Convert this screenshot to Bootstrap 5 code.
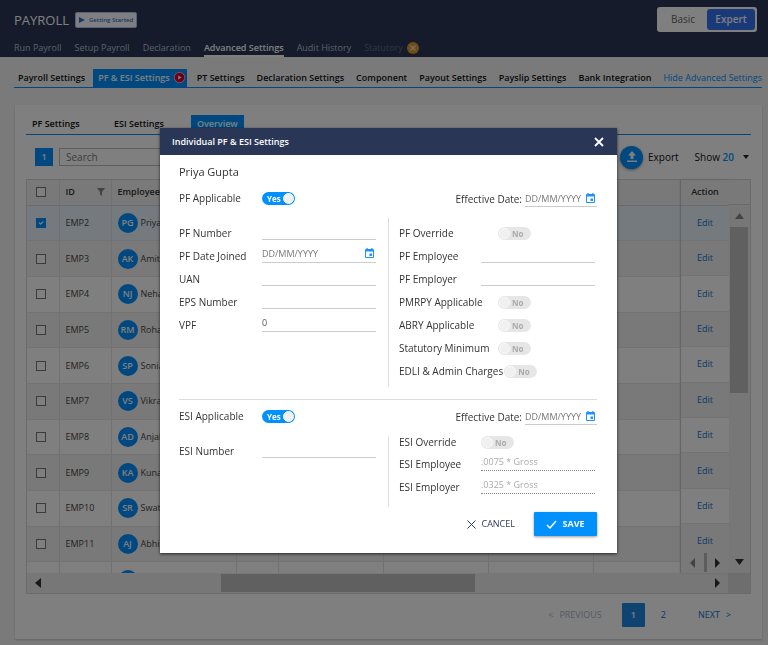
<!DOCTYPE html>
<html lang="en">
<head>
<meta charset="utf-8">
<meta name="viewport" content="width=device-width, initial-scale=1">
<title>Payroll – PF &amp; ESI Settings</title>
<link href="https://cdn.jsdelivr.net/npm/bootstrap@5.3.0/dist/css/bootstrap.min.css" rel="stylesheet">
<style>
  :root { --brand: #0091ff; --navy: #293656; }
  body { font-family: "Open Sans", sans-serif; font-size: 9px; line-height: 12px; color: #222; background: #f5f5f5; min-height: 100vh; overflow: hidden; }
  a { text-decoration: none; }
  button { font-family: inherit; }

  .app-head { background: #2b3756; padding: 7px 11px 0 14px; height: 57px; }
  .app-title { font-size: 13px; line-height: 22px; color: #fff; margin: 0 6px 0 0; }
  .start-btn { font-size: 6px; line-height: 10px; font-weight: 600; color: #2f6fe0; background: #fff; border: 1px solid #a9c4f5; border-radius: 2px; padding: 2px 3px; gap: 4px; }
  .mode-box { background: #fff; border-radius: 3px; padding: 2px; }
  .mode-box button { border: 0; background: none; font-size: 10px; line-height: 19px; color: #666; width: 48px; border-radius: 3px; }
  .mode-box .picked { background: #3572f0; color: #fff; font-weight: 600; }
  .main-nav { gap: 13px; font-size: 9px; line-height: 14px; }
  .main-nav a { color: #b9c0cf; border-bottom: 2px solid transparent; }
  .main-nav .current { color: #fff; font-weight: 600; border-color: #fff; }
  .main-nav .locked { color: #636d86; }

  .sub-nav { margin: 12px 6px 0 14px; padding-left: 4px; border-bottom: 1px solid var(--brand); gap: 12px; font-size: 9px; line-height: 17px; font-weight: 600; }
  .sub-nav a { color: #111; white-space: nowrap; padding-bottom: 1px; }
  .sub-nav .on { color: #fff; background: var(--brand); padding: 0 2px 1px 5px; margin: 0 -2px 0 -4px; gap: 4px; }
  .sub-nav .aside { color: var(--brand); font-weight: 400; }

  .panel { background: #fff; margin: 17px 6px 6px 15px; padding: 10px 11px 12px; box-shadow: 0 1px 2px rgba(0,0,0,.2); }
  .inner-nav { border-bottom: 1px solid var(--brand); gap: 21px; font-size: 9px; line-height: 18px; font-weight: 600; }
  .inner-nav a { color: #111; padding: 0 6px 1px; min-width: 61px; white-space: nowrap; }
  .inner-nav .on { color: #fff; background: var(--brand); min-width: 0; }

  .tools { padding: 0 2px 0 9px; height: 44px; }
  .count-box { width: 18px; height: 18px; background: var(--brand); color: #fff; font-weight: 600; line-height: 18px; }
  .find-input { width: 150px; height: 18px; border: 1px solid #bbb; font-size: 10px; padding: 0 6px; margin-left: 6px; background: #fff; }
  .find-input::placeholder { color: #777; }
  .tools button { border: 0; background: none; font-size: 10px; line-height: 14px; color: #111; padding: 0; gap: 5px; }
  .tools b { color: var(--brand); font-weight: 600; }
  .up-dot { width: 23px; height: 23px; background: var(--brand); box-shadow: 0 1px 3px rgba(0,0,0,.4); }

  .sheet { border: 1px solid #d6d6d6; background: #f2f2f2; height: 415px; }
  .sheet-rows { height: 393px; }
  .pane { overflow: hidden; }
  .pane table { table-layout: fixed; width: 100%; font-size: 9px; margin: 0; height: 418px; }
  .pane th { height: 25px; background: #f2f2f2; font-weight: 600; color: #333; border-bottom: 1px solid #d5d5d5; }
  .pane th, .pane td { padding: 0 6px; border-right: 1px solid #e2e2e2; white-space: nowrap; vertical-align: middle; overflow: hidden; }
  .pane td { background: #fff; color: #444; border-bottom: 1px solid #e6e6e6; }
  .pane tr:nth-child(even) td { background: #f3f3f3; }
  .pane tr.chosen td { background: #e8f4fc; }
  .pane input[type=checkbox] { width: 10px; height: 10px; margin: 0 0 0 3px; border: 1px solid #777; border-radius: 0; float: none; display: block; }
  .pane input[type=checkbox]:checked { background-color: var(--brand); border-color: var(--brand); }
  .face { width: 20px; height: 20px; border-radius: 50%; background: var(--brand); color: #fff; font-weight: 600; line-height: 20px; text-align: center; margin-right: 3px; flex: none; }
  .pane-act { width: 48px; box-shadow: -1px 0 2px rgba(0,0,0,.15); height: 393px; position: relative; }
  .pane-act th, .pane-act td { border-right: 0; text-align: center; padding: 0; }
  .pane-act table { height: 415px; }
  .pane-act td a { color: #1272cf; }
  .act-bar { position: absolute; left: 0; right: 0; bottom: 0; height: 21px; background: #f2f2f2; padding: 0 9px; }
  .act-bar i { width: 3px; height: 19px; background: #bbb; }
  .v-track { width: 21px; background: #efefef; }
  .v-track .cap { height: 25px; background: #f2f2f2; border-bottom: 1px solid #d5d5d5; }
  .v-thumb { width: 18px; height: 166px; background: #c1c1c1; margin-left: 1px; }
  .h-track { height: 20px; background: #efefef; }
  .h-thumb { width: 254px; height: 18px; background: #c1c1c1; margin-left: 180px; }
  .corner { width: 22px; background: #dcdcdc; }
  .pager { margin-top: 9px; padding-right: 20px; font-size: 9px; }
  .pager a { color: #1272cf; }
  .pager .off { color: #a9b7c8; margin-right: 20px; }
  .pager .ends { display: flex; gap: 6px; }
  .pager .here { width: 23px; height: 24px; line-height: 24px; border-radius: 1px; background: #1e88e5; color: #fff; font-weight: 600; text-align: center; }

  .shade { position: fixed; inset: 0; background: rgba(0,0,0,.5); padding: 128px 151px 0 160px; }
  .dlg { background: #fff; box-shadow: 0 1px 3px rgba(0,0,0,.7); font-size: 10px; color: #333; }
  .dlg-head { background: var(--navy); color: #fff; height: 27px; padding: 0 13px 0 12px; }
  .dlg-head h1 { font-size: 9px; line-height: 12px; font-weight: 600; margin: 0; }
  .dlg-head button, .link-btn { border: 0; background: none; padding: 0; }
  .dlg-body { padding: 10px 20px 17px 19px; }
  .person { font-size: 11px; line-height: 14px; margin: 0 0 8px; }
  .sec-top { height: 23px; }
  .tag { width: 83px; flex: none; line-height: 23px; white-space: nowrap; }
  .tag-wide { width: auto; min-width: 99px; padding-right: 1px; }
  .tag-right { width: 82px; }
  .field-row { height: 23px; }
  .row-short { height: 17px; }
  .row-short .tag { line-height: 13px; }
  .col-left { width: 210px; flex: none; border-right: 1px solid #ddd; padding-right: 12px; }
  .col-right { padding: 0 2px 0 10px; }
  .line-in { border: 0; border-bottom: 1px solid #ccc; border-radius: 0; background: none; height: 19px; margin-top: -1px; padding: 0; min-width: 0; width: 100%; font-size: 9px; color: #555; outline: 0; }
  .line-in::placeholder { color: #777; }
  .line-in:disabled { color: #aaa; }
  .line-in.dots { border-bottom-style: dotted; border-color: #888; }
  .date-wrap { border-bottom: 1px solid #ccc; height: 19px; margin-top: -1px; padding-right: 2px; }
  .date-wrap .line-in { border: 0; margin: 0; height: 18px; }
  .date-short { width: 72px; height: 17px; margin: 0 0 0 3px; }
  .date-short .line-in { height: 16px; }
  .date-wrap svg { flex: none; }
  .switch { position: relative; display: block; width: 33px; height: 13px; font-size: 8px; line-height: 13px; font-weight: 700; flex: none; }
  .switch input { appearance: none; position: absolute; inset: 0; margin: 0; border-radius: 7px; background: #e6e6e6; width: 100%; height: 100%; }
  .switch input::after { content: ""; position: absolute; width: 11px; height: 11px; border-radius: 50%; background: #f0f0f0; border: 1px solid #fafafa; top: 1px; left: 1px; }
  .switch input:checked { background: var(--brand); }
  .switch input:checked::after { left: auto; right: 1px; }
  .switch span { position: relative; display: block; padding-left: 14px; color: #aaa; pointer-events: none; }
  .switch input:checked + span { padding-left: 5px; color: #fff; }
  .split { border-top: 1px solid #ddd; margin: 12px 0 5px; }
  .foot { padding-top: 5px; }
  .save-btn { background: var(--brand); color: #fff; font-weight: 700; font-size: 9px; border: 0; width: 63px; height: 24px; border-radius: 1px; box-shadow: 0 1px 3px rgba(0,0,0,.4); gap: 5px; }
  .link-btn { color: #2b3a5c; font-size: 9px; gap: 5px; margin-right: 19px; }
</style>
<script src="https://cdn.jsdelivr.net/npm/bootstrap@5.3.0/dist/js/bootstrap.bundle.min.js"></script>
</head>
<body>
<header class="app-head d-flex flex-column justify-content-between">
  <div class="d-flex align-items-center">
    <h2 class="app-title">PAYROLL</h2>
    <button type="button" class="start-btn d-flex align-items-center"><svg width="6" height="6" viewBox="0 0 6 6"><path d="M0 0l6 3-6 3z" fill="#2f6fe0"/></svg>Getting Started</button>
    <div class="mode-box d-flex ms-auto"><button type="button">Basic</button><button type="button" class="picked">Expert</button></div>
  </div>
  <nav class="main-nav d-flex">
    <a href="#">Run Payroll</a><a href="#">Setup Payroll</a><a href="#">Declaration</a><a href="#" class="current">Advanced Settings</a><a href="#">Audit History</a>
    <a href="#" class="locked d-flex align-items-center gap-1">Statutory <svg width="12" height="12" viewBox="0 0 12 12"><circle cx="6" cy="6" r="6" fill="#e29a2c"/><path d="M3.500 3.500l5 5M8.500 3.500l-5 5" stroke="#f4dfbd" stroke-width="1.200" fill="none"/></svg></a>
  </nav>
</header>

<nav class="sub-nav d-flex">
  <a href="#">Payroll Settings</a>
  <a href="#" class="on d-flex align-items-center">PF &amp; ESI Settings <svg width="11" height="11" viewBox="0 0 11 11"><circle cx="5.500" cy="5.500" r="5.500" fill="#f3c4cf"/><circle cx="5.500" cy="5.500" r="4.800" fill="#d8002f"/><path d="M4.200 3.500l3.400 2-3.400 2z" fill="#fff"/></svg></a>
  <a href="#">PT Settings</a><a href="#">Declaration Settings</a><a href="#">Component</a><a href="#">Payout Settings</a><a href="#">Payslip Settings</a><a href="#">Bank Integration</a><a href="#" class="aside">Hide Advanced Settings</a>
</nav>

<main class="panel">
  <nav class="inner-nav d-flex"><a href="#">PF Settings</a><a href="#">ESI Settings</a><a href="#" class="on">Overview</a></nav>
  <div class="tools d-flex align-items-center">
    <span class="count-box text-center">1</span>
    <input class="find-input" type="text" placeholder="Search" aria-label="Search">
    <button type="button" class="d-flex align-items-center ms-auto"><span class="up-dot rounded-circle d-flex align-items-center justify-content-center"><svg width="12" height="12" viewBox="0 0 12 12"><path d="M6 0l4 4.500H7.500V8h-3V4.500H2zM1 9.500h10V11H1z" fill="#fff"/></svg></span>Export</button>
    <button type="button" class="d-flex align-items-center ms-3"><span>Show <b>20</b></span><svg class="ms-1" width="6" height="4" viewBox="0 0 6 4"><path d="M0 0h6L3 4z" fill="#222"/></svg></button>
  </div>

  <div class="sheet">
    <div class="sheet-rows d-flex">
      <div class="pane flex-grow-1">
        <table>
          <colgroup><col style="width:32px"><col style="width:52px"><col style="width:125px"><col style="width:42px"><col style="width:105px"><col style="width:105px"><col style="width:105px"><col></colgroup>
          <thead><tr><th><input class="form-check-input" type="checkbox" aria-label="Select all"></th><th><span class="d-flex justify-content-between align-items-center">ID<svg width="8" height="8" viewBox="0 0 8 8"><path d="M0 0h8L5 4v4L3 6.500V4z" fill="#888"/></svg></span></th><th>Employee</th><th></th><th></th><th></th><th></th><th></th></tr></thead>
          <tbody>
            <tr class="chosen"><td><input class="form-check-input" type="checkbox" checked aria-label="EMP2"></td><td>EMP2</td><td><span class="d-flex align-items-center"><span class="face">PG</span>Priya Gupta</span></td><td></td><td></td><td></td><td></td><td></td></tr>
            <tr><td><input class="form-check-input" type="checkbox" aria-label="EMP3"></td><td>EMP3</td><td><span class="d-flex align-items-center"><span class="face">AK</span>Amit</span></td><td></td><td></td><td></td><td></td><td></td></tr>
            <tr><td><input class="form-check-input" type="checkbox" aria-label="EMP4"></td><td>EMP4</td><td><span class="d-flex align-items-center"><span class="face">NJ</span>Neha</span></td><td></td><td></td><td></td><td></td><td></td></tr>
            <tr><td><input class="form-check-input" type="checkbox" aria-label="EMP5"></td><td>EMP5</td><td><span class="d-flex align-items-center"><span class="face">RM</span>Rohan</span></td><td></td><td></td><td></td><td></td><td></td></tr>
            <tr><td><input class="form-check-input" type="checkbox" aria-label="EMP6"></td><td>EMP6</td><td><span class="d-flex align-items-center"><span class="face">SP</span>Sonia</span></td><td></td><td></td><td></td><td></td><td></td></tr>
            <tr><td><input class="form-check-input" type="checkbox" aria-label="EMP7"></td><td>EMP7</td><td><span class="d-flex align-items-center"><span class="face">VS</span>Vikram</span></td><td></td><td></td><td></td><td></td><td></td></tr>
            <tr><td><input class="form-check-input" type="checkbox" aria-label="EMP8"></td><td>EMP8</td><td><span class="d-flex align-items-center"><span class="face">AD</span>Anjali</span></td><td></td><td></td><td></td><td></td><td></td></tr>
            <tr><td><input class="form-check-input" type="checkbox" aria-label="EMP9"></td><td>EMP9</td><td><span class="d-flex align-items-center"><span class="face">KA</span>Kunal</span></td><td></td><td></td><td></td><td></td><td></td></tr>
            <tr><td><input class="form-check-input" type="checkbox" aria-label="EMP10"></td><td>EMP10</td><td><span class="d-flex align-items-center"><span class="face">SR</span>Swati</span></td><td></td><td></td><td></td><td></td><td></td></tr>
            <tr><td><input class="form-check-input" type="checkbox" aria-label="EMP11"></td><td>EMP11</td><td><span class="d-flex align-items-center"><span class="face">AJ</span>Abhishek</span></td><td></td><td></td><td></td><td></td><td></td></tr>
            <tr><td></td><td></td><td><span class="d-flex"><span class="face"></span></span></td><td></td><td></td><td></td><td></td><td></td></tr>
          </tbody>
        </table>
      </div>
      <div class="pane pane-act flex-shrink-0">
        <table>
          <thead><tr><th>Action</th></tr></thead>
          <tbody>
            <tr class="chosen"><td><a href="#">Edit</a></td></tr><tr><td><a href="#">Edit</a></td></tr><tr><td><a href="#">Edit</a></td></tr><tr><td><a href="#">Edit</a></td></tr><tr><td><a href="#">Edit</a></td></tr><tr><td><a href="#">Edit</a></td></tr><tr><td><a href="#">Edit</a></td></tr><tr><td><a href="#">Edit</a></td></tr><tr><td><a href="#">Edit</a></td></tr><tr><td><a href="#">Edit</a></td></tr><tr><td>&nbsp;</td></tr>
          </tbody>
        </table>
        <div class="act-bar d-flex align-items-center justify-content-between"><svg width="5" height="10" viewBox="0 0 5 10"><path d="M5 0v10L0 5z" fill="#888"/></svg><i></i><svg width="5" height="10" viewBox="0 0 5 10"><path d="M0 0v10l5-5z" fill="#333"/></svg></div>
      </div>
      <div class="v-track flex-shrink-0 d-flex flex-column">
        <div class="cap"></div>
        <svg class="mx-auto my-2 flex-shrink-0" width="9" height="6" viewBox="0 0 9 6"><path d="M0 6h9L4.500 0z" fill="#888"/></svg>
        <div class="v-thumb"></div>
        <svg class="mx-auto mt-auto mb-2 flex-shrink-0" width="9" height="6" viewBox="0 0 9 6"><path d="M0 0h9L4.500 6z" fill="#333"/></svg>
      </div>
    </div>
    <div class="h-track d-flex">
      <div class="flex-grow-1 d-flex align-items-center px-2"><svg width="6" height="10" viewBox="0 0 6 10"><path d="M6 0v10L0 5z" fill="#333"/></svg><div class="h-thumb"></div><svg class="ms-auto" width="5" height="10" viewBox="0 0 5 10"><path d="M0 0v10l5-5z" fill="#333"/></svg></div>
      <div class="corner"></div>
    </div>
  </div>
  <nav class="pager d-flex align-items-center justify-content-end" aria-label="Pages">
    <a href="#" class="off ends"><span>&lt;</span>PREVIOUS</a><a href="#" class="here">1</a><a href="#" class="px-3">2</a><a href="#" class="ends ps-3">NEXT<span>&gt;</span></a>
  </nav>
</main>

<div class="shade">
  <form class="dlg" role="dialog" aria-labelledby="dlgTitle">
    <div class="dlg-head d-flex align-items-center justify-content-between">
      <h1 id="dlgTitle">Individual PF &amp; ESI Settings</h1>
      <button type="button" aria-label="Close" class="d-flex"><svg width="10" height="10" viewBox="0 0 10 10"><path d="M1 1l8 8M9 1L1 9" stroke="#fff" stroke-width="1.800"/></svg></button>
    </div>
    <div class="dlg-body">
      <p class="person">Priya Gupta</p>
      <div class="sec-top d-flex align-items-center">
        <label class="tag" for="pfApp">PF Applicable</label>
        <span class="switch"><input type="checkbox" id="pfApp" checked><span>Yes</span></span>
        <label class="ms-auto" for="pfEff">Effective Date:</label>
        <span class="date-wrap date-short d-flex align-items-center"><input class="line-in" id="pfEff" type="text" placeholder="DD/MM/YYYY"><svg width="9" height="10" viewBox="0 0 9 10"><path fill="#1e90ff" fill-rule="evenodd" d="M1.500 0h1.200v1h3.600V0h1.200v1H8q1 0 1 1v7q0 1-1 1H1q-1 0-1-1V2q0-1 1-1h.5zM1 3.500V9h7V3.500zM4.500 5.500h2.500V8H4.500z"/></svg></span>
      </div>
      <div class="d-flex pt-2">
        <div class="col-left">
          <div class="field-row d-flex mt-1"><label class="tag" for="pfNo">PF Number</label><input class="line-in" id="pfNo" type="text"></div>
          <div class="field-row d-flex"><label class="tag" for="pfJoin">PF Date Joined</label><span class="date-wrap d-flex align-items-center w-100"><input class="line-in" id="pfJoin" type="text" placeholder="DD/MM/YYYY"><svg width="9" height="10" viewBox="0 0 9 10"><path fill="#1e90ff" fill-rule="evenodd" d="M1.500 0h1.200v1h3.600V0h1.200v1H8q1 0 1 1v7q0 1-1 1H1q-1 0-1-1V2q0-1 1-1h.5zM1 3.500V9h7V3.500zM4.500 5.500h2.500V8H4.500z"/></svg></span></div>
          <div class="field-row d-flex"><label class="tag" for="uan">UAN</label><input class="line-in" id="uan" type="text"></div>
          <div class="field-row d-flex"><label class="tag" for="eps">EPS Number</label><input class="line-in" id="eps" type="text"></div>
          <div class="field-row d-flex"><label class="tag" for="vpf">VPF</label><input class="line-in" id="vpf" type="text" value="0"></div>
        </div>
        <div class="col-right flex-grow-1">
          <div class="field-row d-flex align-items-center mt-1"><label class="tag tag-wide" for="pfOv">PF Override</label><span class="switch"><input type="checkbox" id="pfOv" disabled><span>No</span></span></div>
          <div class="field-row d-flex"><label class="tag tag-right" for="pfEe">PF Employee</label><input class="line-in" id="pfEe" type="text" disabled></div>
          <div class="field-row d-flex"><label class="tag tag-right" for="pfEr">PF Employer</label><input class="line-in" id="pfEr" type="text" disabled></div>
          <div class="field-row d-flex align-items-center"><label class="tag tag-wide" for="pmrpy">PMRPY Applicable</label><span class="switch"><input type="checkbox" id="pmrpy" disabled><span>No</span></span></div>
          <div class="field-row d-flex align-items-center"><label class="tag tag-wide" for="abry">ABRY Applicable</label><span class="switch"><input type="checkbox" id="abry" disabled><span>No</span></span></div>
          <div class="field-row d-flex align-items-center"><label class="tag tag-wide" for="statMin">Statutory Minimum</label><span class="switch"><input type="checkbox" id="statMin" disabled><span>No</span></span></div>
          <div class="field-row d-flex align-items-center mb-1"><label class="tag tag-wide" for="edli">EDLI &amp; Admin Charges</label><span class="switch"><input type="checkbox" id="edli" disabled><span>No</span></span></div>
        </div>
      </div>
      <div class="split"></div>
      <div class="sec-top d-flex align-items-center">
        <label class="tag" for="esiApp">ESI Applicable</label>
        <span class="switch"><input type="checkbox" id="esiApp" checked><span>Yes</span></span>
        <label class="ms-auto" for="esiEff">Effective Date:</label>
        <span class="date-wrap date-short d-flex align-items-center"><input class="line-in" id="esiEff" type="text" placeholder="DD/MM/YYYY"><svg width="9" height="10" viewBox="0 0 9 10"><path fill="#1e90ff" fill-rule="evenodd" d="M1.500 0h1.200v1h3.600V0h1.200v1H8q1 0 1 1v7q0 1-1 1H1q-1 0-1-1V2q0-1 1-1h.5zM1 3.500V9h7V3.500zM4.500 5.500h2.500V8H4.500z"/></svg></span>
      </div>
      <div class="d-flex pt-2">
        <div class="col-left"><div class="field-row d-flex mt-1"><label class="tag" for="esiNo">ESI Number</label><input class="line-in" id="esiNo" type="text"></div></div>
        <div class="col-right flex-grow-1 pb-2">
          <div class="row-short d-flex"><label class="tag tag-right" for="esiOv">ESI Override</label><span class="switch"><input type="checkbox" id="esiOv" disabled><span>No</span></span></div>
          <div class="field-row d-flex"><label class="tag tag-right" for="esiEe">ESI Employee</label><input class="line-in dots" id="esiEe" type="text" value=".0075 * Gross" disabled></div>
          <div class="field-row d-flex"><label class="tag tag-right" for="esiEr">ESI Employer</label><input class="line-in dots" id="esiEr" type="text" value=".0325 * Gross" disabled></div>
        </div>
      </div>
      <div class="foot d-flex justify-content-end align-items-center">
        <button type="button" class="link-btn d-flex align-items-center"><svg width="9" height="9" viewBox="0 0 9 9"><path d="M.5 .5l8 8M8.500 .5l-8 8" stroke="#2b3a5c"/></svg>CANCEL</button>
        <button type="submit" class="save-btn d-flex align-items-center justify-content-center"><svg width="11" height="9" viewBox="0 0 11 9"><path d="M1 5l3 3 6-7" stroke="#fff" stroke-width="1.500" fill="none"/></svg>SAVE</button>
      </div>
    </div>
  </form>
</div>
</body>
</html>
